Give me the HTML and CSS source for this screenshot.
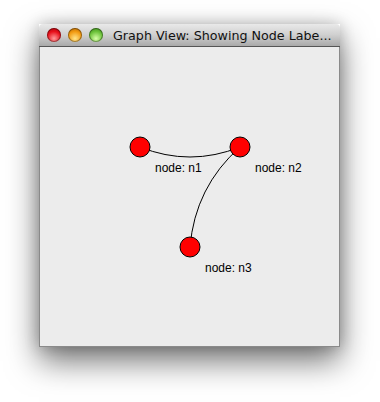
FILE: index.html
```html
<!DOCTYPE html>
<html lang="en">
<head>
  <meta charset="UTF-8" />
  <title>Graph View</title>
  <link rel="stylesheet" href="styles.css">
</head>
<body>
  <div class="desktop">
    <div class="window">
      <div class="titlebar">
        <span class="light red"></span>
        <span class="light orange"></span>
        <span class="light green"></span>
        <span class="title">Graph View: Showing Node Labe...</span>
      </div>
      <div class="content">
        <!-- graph canvas -->
        <svg class="graph" width="299" height="299" viewBox="0 0 299 299">
          <path d="M100 100 Q150 120 200 100" fill="none" stroke="#000" stroke-width="1"/>
          <path d="M200 100 Q155 140 150 200" fill="none" stroke="#000" stroke-width="1"/>
          <circle cx="100" cy="100" r="10" fill="#ff0000" stroke="#000" stroke-width="1"/>
          <circle cx="200" cy="100" r="10" fill="#ff0000" stroke="#000" stroke-width="1"/>
          <circle cx="150" cy="200" r="10" fill="#ff0000" stroke="#000" stroke-width="1"/>
          <text class="label" x="115" y="125">node: n1</text>
          <text class="label" x="215" y="125">node: n2</text>
          <text class="label" x="165" y="225">node: n3</text>
        </svg>
      </div>
    </div>
  </div>
</body>
</html>
```

FILE: styles.css
```css
body {
  margin: 0;
  background: #ffffff;
  font-family: 'Liberation Sans', Arial, sans-serif;
}

.desktop {
  min-height: 402px;
  box-sizing: border-box;
  padding: 24px 0 0 39px;
}

.window {
  width: 301px;
  box-shadow: 0 14px 30px rgba(0, 0, 0, 0.55), 0 0 14px rgba(0, 0, 0, 0.2);
}

/* Title bar */
.titlebar {
  height: 22px;
  display: flex;
  align-items: center;
  padding-left: 8px;
  border-radius: 4px 4px 0 0;
  background: linear-gradient(#e9e9e9, #cfcfcf 50%, #a9a9a9);
  border-bottom: 1px solid #555;
}

.light {
  width: 14px;
  height: 14px;
  border-radius: 50%;
  margin-right: 7px;
  box-shadow: inset 0 0 0 1px rgba(0, 0, 0, 0.35);
}

.red {
  background: radial-gradient(circle at 50% 75%, #ff9a9a, #e8101a 55%, #9a0008);
}

.orange {
  background: radial-gradient(circle at 50% 75%, #ffe58a, #f29a10 55%, #a45a00);
}

.green {
  background: radial-gradient(circle at 50% 75%, #d8ffa8, #6cc23a 55%, #2f7a12);
}

.title {
  margin-left: 3px;
  font-family: 'DejaVu Sans', sans-serif;
  font-size: 12.7px;
  color: #111;
  white-space: nowrap;
}

/* Canvas */
.content {
  height: 299px;
  background: #ececec;
  border: 1px solid #8a8a8a;
  border-top: none;
}

.graph {
  display: block;
}

.label {
  font-family: 'Liberation Sans', Arial, sans-serif;
  font-size: 12px;
  fill: #000;
}
```
